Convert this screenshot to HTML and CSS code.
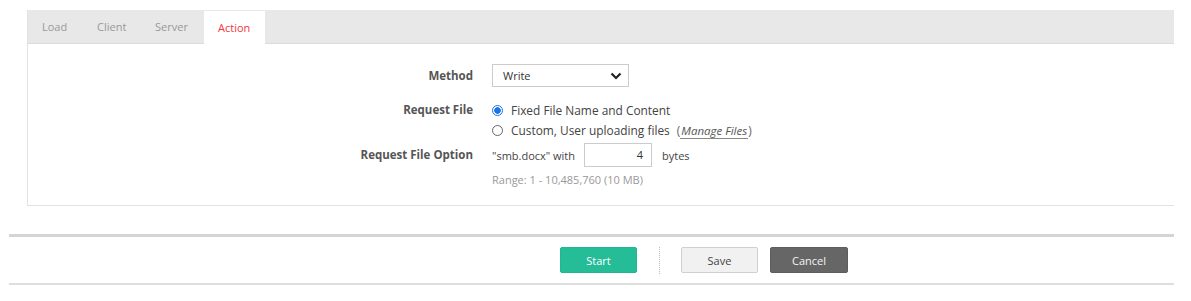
FILE: index.html
```html
<!DOCTYPE html>
<html lang="en">
<head>
  <meta charset="UTF-8">
  <title>Action</title>
  <link rel="stylesheet" href="styles.css">
</head>
<body>
  <div class="page">
    <div class="panel">
      <div class="tabs">
        <div class="tab">Load</div>
        <div class="tab">Client</div>
        <div class="tab">Server</div>
        <div class="tab active">Action</div>
      </div>

      <div class="form">
        <div class="label method-label">Method</div>
        <div class="value">
          <div class="select">
            <span>Write</span>
            <svg width="12" height="8" viewBox="0 0 12 8"><path d="M1.5 1.5 L6 6 L10.5 1.5" fill="none" stroke="#222" stroke-width="2.2"/></svg>
          </div>
        </div>

        <div class="label file-label">Request File</div>
        <div class="value radios">
          <div class="radio-line"><span class="radio on"></span>Fixed File Name and Content</div>
          <div class="radio-line"><span class="radio"></span>Custom, User uploading files <span class="manage">(<a>Manage Files</a>)</span></div>
        </div>

        <div class="label option-label">Request File Option</div>
        <div class="value">
          <div class="size-line">"smb.docx" with <span class="num">4</span> bytes</div>
          <div class="range">Range: 1 - 10,485,760 (10 MB)</div>
        </div>
      </div>
    </div>

    <div class="footer">
      <button class="btn start">Start</button>
      <span class="sep"></span>
      <button class="btn save">Save</button>
      <button class="btn cancel">Cancel</button>
    </div>
  </div>
</body>
</html>
```

FILE: styles.css
```css
body {
  margin: 0;
  background: #fff;
  font-family: 'Open Sans', 'Noto Sans', sans-serif;
  font-size: 11px;
  color: #444;
}

.page {
  padding: 10px 17px 0 9px;
}

.panel {
  margin-left: 18px;
  border-left: 1px solid #e2e2e2;
  border-bottom: 1px solid #e2e2e2;
  height: 195px;
}

.tabs {
  display: flex;
  height: 33px;
  background: #e8e8e8;
  border-bottom: 1px solid #dcdcdc;
  padding-left: 1px;
}

.tab {
  padding: 0 13px 0 13px;
  line-height: 34px;
  color: #999;
  min-width: 0;
}

.tab:nth-child(1) { width: 29px; }
.tab:nth-child(2) { width: 32px; }
.tab:nth-child(3) { width: 36px; }

.tab.active {
  background: #fff;
  color: #f2373b;
  margin-top: 1px;
  line-height: 33px;
  height: 34px;
  padding: 0 14px;
  width: 33px;
}

.form {
  display: grid;
  grid-template-columns: 445px auto;
  column-gap: 19px;
  padding-top: 20px;
}

.label {
  text-align: right;
  font-weight: bold;
  font-size: 11.5px;
  color: #555;
}

.method-label {
  line-height: 23px;
}

.file-label {
  margin-top: 13px;
  line-height: 20px;
}

.option-label {
  margin-top: 3px;
  line-height: 24px;
}

.select {
  height: 21px;
  border: 1px solid #ccc;
  display: flex;
  align-items: center;
  justify-content: space-between;
  padding: 0 6px 0 10px;
  box-sizing: content-box;
  width: 119px;
  color: #333;
}

.radios {
  margin-top: 13px;
}

.radio-line {
  display: flex;
  align-items: center;
  height: 20px;
  font-size: 11.9px;
  color: #444;
}

.radio {
  width: 9px;
  height: 9px;
  border: 1px solid #666;
  border-radius: 50%;
  margin: 0 8px 0 0;
  flex-shrink: 0;
}

.radio.on {
  border-color: #1a73e8;
  background: radial-gradient(circle, #1a73e8 0 3px, #fff 3.5px);
}

.manage {
  margin-left: 7px;
  color: #666;
}

.manage a {
  font-style: italic;
  font-size: 11.5px;
  color: #555;
  border-bottom: 1px solid #888;
  padding: 0 1px;
}

.size-line {
  margin-top: 3px;
  display: flex;
  align-items: center;
  height: 24px;
  color: #444;
}

.num {
  display: inline-block;
  width: 58px;
  height: 22px;
  line-height: 22px;
  border: 1px solid #ccc;
  text-align: right;
  padding-right: 8px;
  margin: 0 10px 0 9px;
  color: #333;
}

.range {
  line-height: 20px;
  margin-top: 3px;
  color: #999;
}

.footer {
  margin-top: 28px;
  border-top: 3px solid #d4d4d4;
  border-bottom: 2px solid #dedede;
  height: 46px;
  display: flex;
  align-items: center;
  padding-left: 551px;
}

.btn {
  font-family: inherit;
  font-size: 11px;
  width: 77px;
  height: 26px;
  border-radius: 2px;
  cursor: pointer;
  padding: 0;
}

.start {
  background: #24bd98;
  border: 1px solid #22b592;
  color: #fff;
}

.sep {
  width: 0;
  height: 27px;
  border-left: 1px dotted #bbb;
  margin: 0 21px 0 22px;
}

.save {
  background: #f1f1f1;
  border: 1px solid #cfcfcf;
  color: #444;
}

.cancel {
  margin-left: 12px;
  background: #666;
  border: 1px solid #5d5d5d;
  color: #f4f4f4;
  width: 78px;
}
```
